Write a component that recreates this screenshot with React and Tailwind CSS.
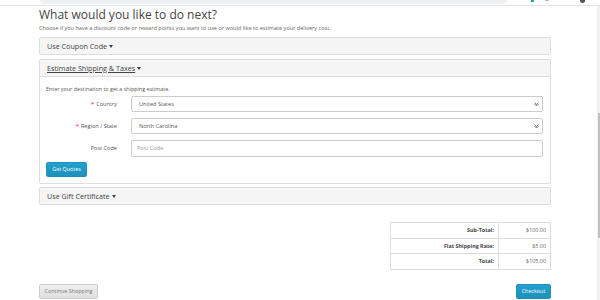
const font = { fontFamily: '"Open Sans", "Liberation Sans", sans-serif' };

function Caret() {
  return (
    <span className="inline-block ml-[2px] align-middle w-0 h-0 border-l-[2.5px] border-r-[2.5px] border-t-[3px] border-l-transparent border-r-transparent border-t-[#444]" />
  );
}

function PanelHeading({ children, underline }) {
  return (
    <div className="h-[17px] px-[7px] flex items-center bg-[#f5f5f5] border-b border-[#ddd] text-[7.2px] text-[#444]">
      <span className={underline ? "underline" : ""}>{children}</span>
      <Caret />
    </div>
  );
}

function Field({ label, required, children }) {
  return (
    <div className="flex items-center h-[16px]">
      <div className="w-[72px] text-right text-[5.6px] text-[#555] pr-[1px]">
        {required && <span className="text-[#f00] mr-[2px]">*</span>}
        {label}
      </div>
      <div className="ml-[13px] flex-1">{children}</div>
    </div>
  );
}

function SelectBox({ value }) {
  return (
    <div className="h-[16px] border border-[#ccc] rounded-[2px] bg-white flex items-center justify-between pl-[7px] pr-[3px] text-[5.6px] text-[#555]">
      <span>{value}</span>
      <svg width="5" height="4" viewBox="0 0 10 8">
        <path d="M1 1l4 4 4-4M1 4l4 4 4-4" stroke="#444" strokeWidth="1.4" fill="none" />
      </svg>
    </div>
  );
}

export default function App() {
  return (
    <div className="w-[600px] h-[300px] overflow-hidden bg-white flex flex-col" style={font}>
      {/* browser chrome remnant */}
      <div className="h-[6px] flex items-start border-b border-[#e3e3e3] shrink-0">
        <div className="ml-[40px] w-[467px] h-[4px] bg-[#eef0f2] rounded-b-[4px]" />
        <div className="ml-[24px] w-[3px] h-[2px] bg-[#1ab394]" />
        <div className="ml-[11px] w-[4px] h-[1px] bg-[#bbb]" />
        <div className="ml-[31px] w-[5px] h-[3px] rounded-b-full bg-[#555]" />
      </div>

      <div className="flex flex-1 min-h-0">
        <div className="flex-1 pl-[39px] pr-[46px]">
          <h1 className="text-[12px] leading-[16px] text-[#444] mt-[1px]">
            What would you like to do next?
          </h1>
          <p className="text-[5.55px] leading-[8px] text-[#666] mt-[1px]">
            Choose if you have a discount code or reward points you want to use or would like to estimate your delivery cost.
          </p>

          <div className="mt-[5px] border border-[#ddd] rounded-[2px] overflow-hidden">
            <div className="-mb-px">
              <PanelHeading>Use Coupon Code</PanelHeading>
            </div>
          </div>

          <div className="mt-[4px] border border-[#ddd] rounded-[2px] overflow-hidden">
            <PanelHeading underline>Estimate Shipping &amp; Taxes</PanelHeading>
            <div className="px-[6px] pt-[8px] pb-[6px]">
              <p className="text-[5.4px] leading-[8px] text-[#555]">
                Enter your destination to get a shipping estimate.
              </p>
              <div className="mt-[3px] flex flex-col gap-[6px] pr-[1px]">
                <Field label="Country" required>
                  <SelectBox value="United States" />
                </Field>
                <Field label="Region / State" required>
                  <SelectBox value="North Carolina" />
                </Field>
                <Field label="Post Code">
                  <div className="h-[17px] border border-[#ccc] rounded-[2px] bg-white flex items-center pl-[5px] text-[5.6px] text-[#999]">
                    Post Code
                  </div>
                </Field>
              </div>
              <button className="block mt-[6px] w-[41px] h-[15px] rounded-[2px] border border-[#1f90bb] bg-gradient-to-b from-[#23a1d1] to-[#1f90bb] text-white text-[5.4px]">
                Get Quotes
              </button>
            </div>
          </div>

          <div className="mt-[3px] border border-[#ddd] rounded-[2px] overflow-hidden">
            <div className="-mb-px">
              <PanelHeading>Use Gift Certificate</PanelHeading>
            </div>
          </div>

          <div className="mt-[17px] flex justify-end">
            <table className="w-[161px] border-collapse text-[5.4px] text-[#444]">
              <tbody>
                {[
                  ["Sub-Total:", "$100.00"],
                  ["Flat Shipping Rate:", "$5.00"],
                  ["Total:", "$105.00"],
                ].map(([k, v]) => (
                  <tr key={k} className="h-[15.5px]">
                    <td className="w-[108px] border border-[#ddd] text-right font-bold pr-[4px]">{k}</td>
                    <td className="border border-[#ddd] text-right pr-[4px] text-[#666]">{v}</td>
                  </tr>
                ))}
              </tbody>
            </table>
          </div>

          <div className="mt-[14px] flex justify-between">
            <button className="w-[59px] h-[15px] rounded-[2px] border border-[#ccc] bg-gradient-to-b from-[#eee] to-[#e0e0e0] text-[#777] text-[5.4px]">
              Continue Shopping
            </button>
            <button className="w-[35px] h-[15px] rounded-[2px] border border-[#1f90bb] bg-gradient-to-b from-[#23a1d1] to-[#1f90bb] text-white text-[5.4px]">
              Checkout
            </button>
          </div>
        </div>

        {/* scrollbar */}
        <div className="w-[3px] bg-[#f1f1f1] pt-[107px]">
          <div className="h-[125px] w-[2px] ml-[1px] bg-[#c1c1c1]" />
        </div>
      </div>
    </div>
  );
}
